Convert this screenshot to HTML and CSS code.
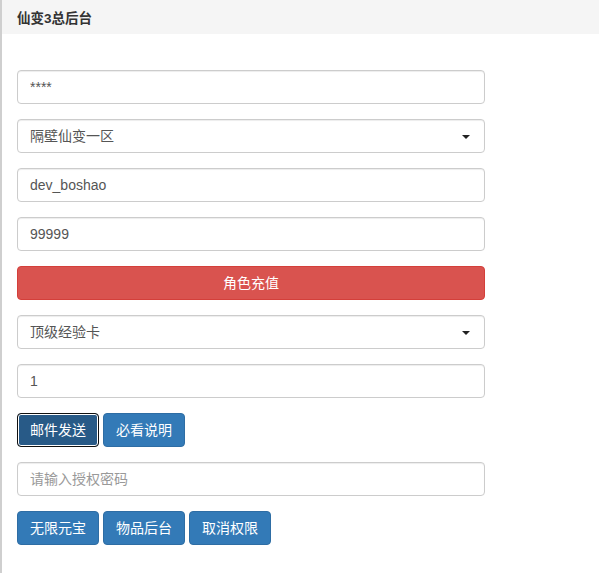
FILE: index.html
```html
<!DOCTYPE html>
<html lang="zh-CN">
<head>
<meta charset="utf-8">
<title>仙变3总后台</title>
<link rel="stylesheet" href="styles.css">
</head>
<body>
<div class="panel">
  <div class="panel-heading">仙变3总后台</div>
  <div class="panel-body">
    <form class="form">
      <div class="form-group"><input class="form-control" type="text" value="****"></div>
      <div class="form-group"><div class="form-control select">隔壁仙变一区<span class="caret"></span></div></div>
      <div class="form-group"><input class="form-control" type="text" value="dev_boshao"></div>
      <div class="form-group"><input class="form-control" type="text" value="99999"></div>
      <div class="form-group"><button type="button" class="btn btn-danger btn-block">角色充值</button></div>
      <div class="form-group"><div class="form-control select">顶级经验卡<span class="caret"></span></div></div>
      <div class="form-group"><input class="form-control" type="text" value="1"></div>
      <div class="form-group btn-row">
        <button type="button" class="btn btn-primary btn-focus">邮件发送</button>
        <button type="button" class="btn btn-primary">必看说明</button>
      </div>
      <div class="form-group"><input class="form-control" type="text" placeholder="请输入授权密码"></div>
      <div class="form-group btn-row">
        <button type="button" class="btn btn-primary">无限元宝</button>
        <button type="button" class="btn btn-primary">物品后台</button>
        <button type="button" class="btn btn-primary">取消权限</button>
      </div>
    </form>
  </div>
</div>
</body>
</html>
```
FILE: styles.css
```css
html, body {
  margin: 0;
  padding: 0;
  background: #fff;
}
body {
  font-family: "Liberation Sans", "Noto Sans CJK SC", sans-serif;
  font-size: 14px;
  color: #333;
}
.panel {
  margin-left: 0;
  border-left: 2px solid #cfcfcf;
  min-height: 573px;
  box-sizing: border-box;
  background: #fff;
}
.panel-heading {
  height: 34px;
  display: flex;
  align-items: center;
  padding: 0 15px;
  background: #f5f5f5;
  font-size: 13.5px;
  font-weight: bold;
  color: #333;
}
.panel-body {
  padding: 36px 15px 15px;
}
.form {
  width: 468px;
}
.form-group {
  margin-bottom: 15px;
}
.form-control {
  display: block;
  box-sizing: border-box;
  width: 100%;
  height: 34px;
  padding: 6px 12px;
  font-family: inherit;
  font-size: 14px;
  line-height: 20px;
  color: #555;
  background: #fff;
  border: 1px solid #ccc;
  border-radius: 4px;
  box-shadow: inset 0 1px 1px rgba(0,0,0,.075);
  outline: none;
}
.form-control::placeholder {
  color: #999;
}
.select {
  position: relative;
}
.caret {
  position: absolute;
  right: 14px;
  top: 15px;
  width: 0;
  height: 0;
  border-left: 4px solid transparent;
  border-right: 4px solid transparent;
  border-top: 4px solid #222;
}
.btn {
  display: inline-block;
  box-sizing: border-box;
  height: 34px;
  padding: 6px 12px;
  font-family: inherit;
  font-size: 14px;
  line-height: 20px;
  color: #fff;
  border: 1px solid transparent;
  border-radius: 4px;
  cursor: pointer;
  margin: 0;
}
.btn-block {
  display: block;
  width: 100%;
}
.btn-danger {
  background: #d9534f;
  border-color: #d43f3a;
}
.btn-primary {
  background: #337ab7;
  border-color: #2e6da4;
}
.btn-row {
  display: flex;
  gap: 4px;
}
.btn-focus {
  background: #285a87;
  border-color: #111;
  box-shadow: inset 0 0 0 1px #fff;
}
```
